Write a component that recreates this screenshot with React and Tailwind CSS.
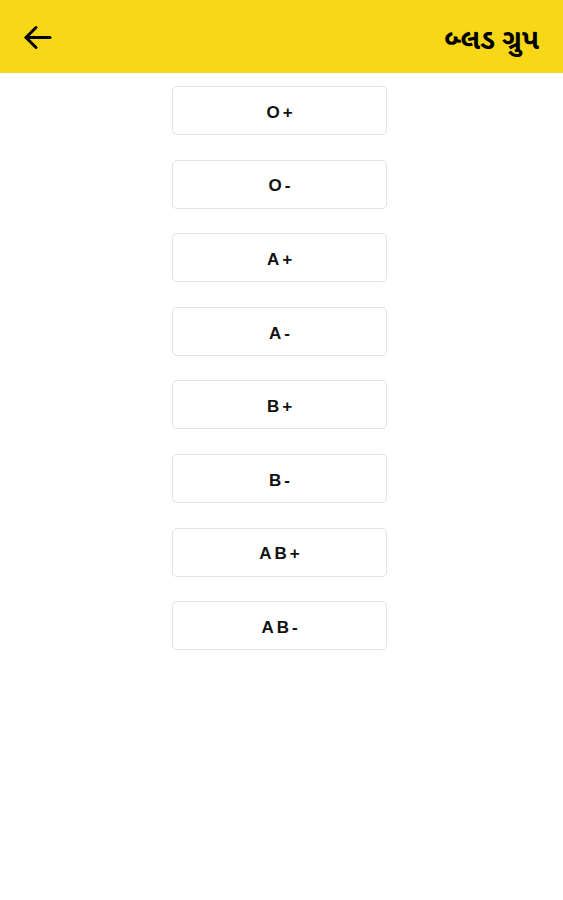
import React from "react";

const groups = ["O+", "O-", "A+", "A-", "B+", "B-", "AB+", "AB-"];

export default function App() {
  return (
    <div className="w-[563px] h-[900px] bg-white" style={{ fontFamily: '"Noto Sans", "Noto Sans Gujarati", sans-serif' }}>
      <div className="h-[73px] bg-[#f8d717] flex items-center justify-between pr-[24px]">
        <svg width="76" height="73" viewBox="0 0 76 73" fill="none" stroke="#000" strokeWidth="3" strokeLinecap="round" strokeLinejoin="round">
          <path d="M26 37.5H50" />
          <path d="M36 27.5L26 37.5L36 47.5" />
        </svg>
        <div className="text-[28px] font-bold text-black leading-none pt-[3px]">બ્લડ ગ્રુપ</div>
      </div>
      <div className="flex flex-col items-center pt-[13px] pr-[4px] gap-[24.6px]">
        {groups.map((g) => (
          <div
            key={g}
            className="w-[215px] h-[49px] border border-[#e2e2e2] rounded-[5px] flex items-center justify-center pt-[4px] text-[17px] font-bold tracking-[3px] text-[#111] font-['Liberation_Sans',Arial,sans-serif]"
          >
            <span className="-mr-[3px]">{g}</span>
          </div>
        ))}
      </div>
    </div>
  );
}
